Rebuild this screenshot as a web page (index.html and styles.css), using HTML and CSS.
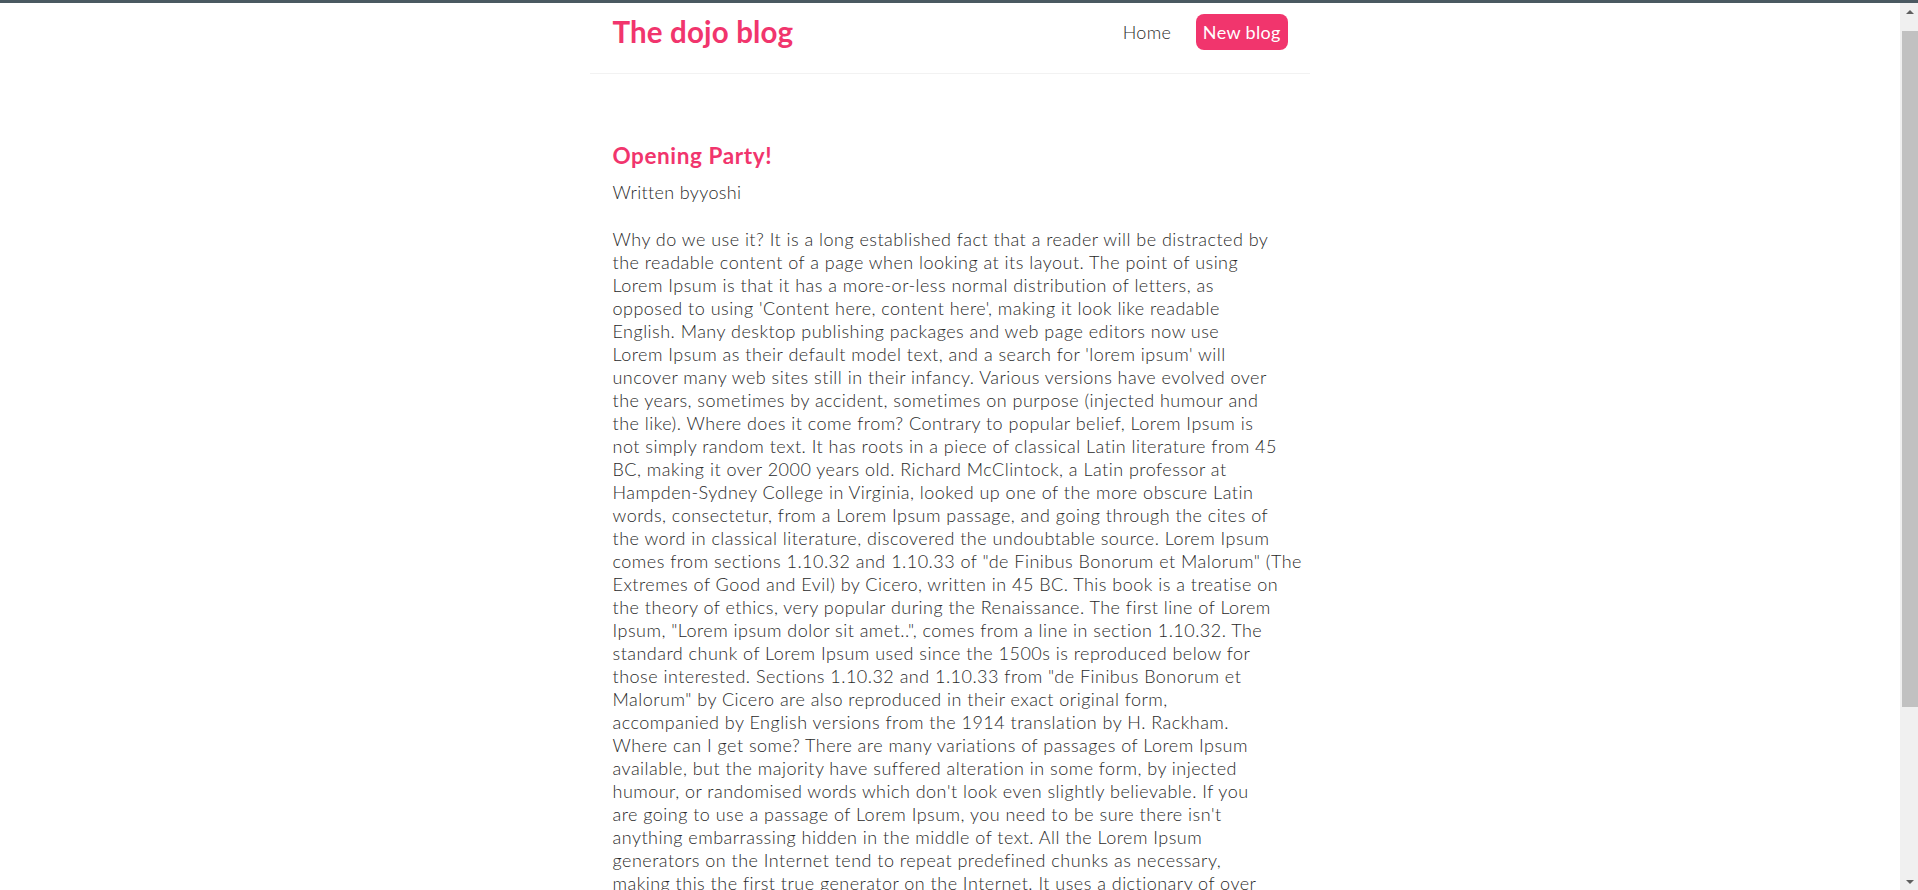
FILE: index.html
```html
<!DOCTYPE html>
<html lang="en">
<head>
<meta charset="utf-8">
<title>The dojo blog</title>
<link rel="stylesheet" href="styles.css">
</head>
<body>
<div class="frame-bar"></div>
<div class="window">
  <div class="page">
    <nav class="navbar">
      <h1 class="brand">The dojo blog</h1>
      <div class="links">
        <a href="#" class="link">Home</a>
        <a href="#" class="link link-primary">New blog</a>
      </div>
    </nav>
    <main class="content">
      <article class="blog-details">
        <h2 class="blog-title">Opening Party!</h2>
        <p class="blog-author">Written byyoshi</p>
        <div class="blog-body">Why do we use it? It is a long established fact that a reader will be distracted by<br>
the readable content of a page when looking at its layout. The point of using<br>
Lorem Ipsum is that it has a more-or-less normal distribution of letters, as<br>
opposed to using 'Content here, content here', making it look like readable<br>
English. Many desktop publishing packages and web page editors now use<br>
Lorem Ipsum as their default model text, and a search for 'lorem ipsum' will<br>
uncover many web sites still in their infancy. Various versions have evolved over<br>
the years, sometimes by accident, sometimes on purpose (injected humour and<br>
the like). Where does it come from? Contrary to popular belief, Lorem Ipsum is<br>
not simply random text. It has roots in a piece of classical Latin literature from 45<br>
BC, making it over 2000 years old. Richard McClintock, a Latin professor at<br>
Hampden-Sydney College in Virginia, looked up one of the more obscure Latin<br>
words, consectetur, from a Lorem Ipsum passage, and going through the cites of<br>
the word in classical literature, discovered the undoubtable source. Lorem Ipsum<br>
comes from sections 1.10.32 and 1.10.33 of "de Finibus Bonorum et Malorum" (The<br>
Extremes of Good and Evil) by Cicero, written in 45 BC. This book is a treatise on<br>
the theory of ethics, very popular during the Renaissance. The first line of Lorem<br>
Ipsum, "Lorem ipsum dolor sit amet..", comes from a line in section 1.10.32. The<br>
standard chunk of Lorem Ipsum used since the 1500s is reproduced below for<br>
those interested. Sections 1.10.32 and 1.10.33 from "de Finibus Bonorum et<br>
Malorum" by Cicero are also reproduced in their exact original form,<br>
accompanied by English versions from the 1914 translation by H. Rackham.<br>
Where can I get some? There are many variations of passages of Lorem Ipsum<br>
available, but the majority have suffered alteration in some form, by injected<br>
humour, or randomised words which don't look even slightly believable. If you<br>
are going to use a passage of Lorem Ipsum, you need to be sure there isn't<br>
anything embarrassing hidden in the middle of text. All the Lorem Ipsum<br>
generators on the Internet tend to repeat predefined chunks as necessary,<br>
making this the first true generator on the Internet. It uses a dictionary of over<br>
200 Latin words, combined with a handful of model sentence structures, to<br>
generate Lorem Ipsum which looks reasonable. The generated Lorem Ipsum is<br>
therefore always free from repetition, injected humour, or non-characteristic<br>
words etc.</div>
      </article>
    </main>
  </div>
  <div class="scrollbar" aria-hidden="true">
    <div class="sb-button"><span class="arrow-up"></span></div>
    <div class="sb-track"><div class="sb-thumb"></div></div>
    <div class="sb-button"><span class="arrow-down"></span></div>
  </div>
</div>
</body>
</html>
```

FILE: styles.css
```css
html, body {
  margin: 0;
  padding: 0;
  height: 100%;
  overflow: hidden;
  background: #ffffff;
}

* {
  margin: 0;
  font-family: "Lato", "Noto Sans", sans-serif;
  color: #333333;
}

.frame-bar {
  height: 3px;
  background: #4a5961;
}

.window {
  display: flex;
  height: 887px;
}

.page {
  flex: 1;
  min-width: 0;
  overflow: hidden;
  background: #ffffff;
}

/* window scrollbar */
.scrollbar {
  width: 18px;
  flex: 0 0 18px;
  display: flex;
  flex-direction: column;
  background: #f0f0f0;
}

.sb-button {
  height: 17px;
  flex: 0 0 17px;
  display: flex;
  align-items: center;
  justify-content: center;
  padding-left: 2px;
}

.arrow-up {
  width: 0;
  height: 0;
  border-left: 4px solid transparent;
  border-right: 4px solid transparent;
  border-bottom: 4px solid #606060;
}

.arrow-down {
  width: 0;
  height: 0;
  border-left: 4px solid transparent;
  border-right: 4px solid transparent;
  border-top: 4px solid #606060;
}

.sb-track {
  flex: 1;
  padding-left: 2px;
}

.sb-thumb {
  margin-top: 11px;
  height: 676px;
  background: #c1c1c1;
}

/* blog */
.navbar {
  display: flex;
  align-items: center;
  max-width: 675px;
  margin: 0 auto;
  padding: 11px 22.5px 23px;
  border-bottom: 1px solid #f2f2f2;
}

.brand {
  font-size: 29.5px;
  font-weight: 700;
  line-height: 36px;
  letter-spacing: 0.15px;
  color: #f1356d;
}

.links {
  margin-left: auto;
  display: flex;
  align-items: center;
}

.link {
  margin-left: 18px;
  padding: 6.75px;
  font-size: 18px;
  font-weight: 300;
  line-height: 22.5px;
  letter-spacing: 0.35px;
  text-decoration: none;
  color: #2a2a2a;
}

.link-primary {
  color: #ffffff;
  font-weight: 400;
  background: #f1356d;
  border-radius: 8px;
}

.content {
  max-width: 675px;
  margin: 45px auto;
  padding: 22.5px;
}

.blog-title {
  font-size: 22.5px;
  font-weight: 700;
  line-height: 28px;
  letter-spacing: 0.6px;
  color: #f1356d;
  margin-bottom: 11.25px;
}

.blog-author {
  font-size: 18px;
  font-weight: 300;
  line-height: 23px;
  letter-spacing: 0.35px;
  color: #2a2a2a;
}

.blog-body {
  margin: 24px 0;
  font-size: 18px;
  font-weight: 300;
  line-height: 23px;
  letter-spacing: 0.48px;
  white-space: nowrap;
  color: #2a2a2a;
}
```
